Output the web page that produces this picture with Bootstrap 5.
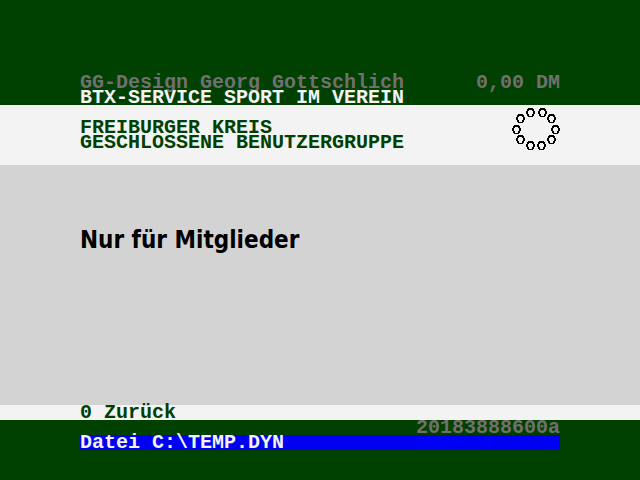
<!DOCTYPE html>
<html lang="de">
<head>
<meta charset="utf-8">
<meta name="viewport" content="width=device-width, initial-scale=1">
<title>BTX-Service Sport im Verein</title>
<link href="https://cdn.jsdelivr.net/npm/bootstrap@5.3.0/dist/css/bootstrap.min.css" rel="stylesheet">
<style>
:root { --btx-green: #004000; --btx-light: #f3f3f3; --btx-grey: #d3d3d3; --btx-dim: #707070; --btx-blue: #0000f3; }
body { background: var(--btx-green); color: var(--btx-light); font: 700 20px/15px "Liberation Mono", monospace; }
.screen-col { width: 75%; }
.top-band { padding-top: 75px; }
.dim { color: var(--btx-dim); }
.light-band { background: var(--btx-light); color: var(--btx-green); }
.club-names { padding: 15px 0; }
.grey-band { background: var(--btx-grey); color: #000; padding: 60px 0; }
.headline { font: 700 24px/30px "DejaVu Sans Condensed", "DejaVu Sans", sans-serif; }
.input-line { background: var(--btx-blue); }
.bottom-band { padding-bottom: 30px; }
</style>
</head>
<body class="min-vh-100 d-flex flex-column">
<header class="top-band">
  <div class="screen-col mx-auto">
    <div class="dim d-flex justify-content-between text-nowrap"><span>GG-Design Georg Gottschlich</span><span>0,00 DM</span></div>
    <div>BTX-SERVICE SPORT IM VEREIN</div>
  </div>
</header>
<section class="light-band">
  <div class="screen-col mx-auto d-flex justify-content-between align-items-start">
    <div class="club-names"><div>FREIBURGER KREIS</div><div>GESCHLOSSENE BENUTZERGRUPPE</div></div>
    <svg width="48" height="48" viewBox="0 0 48 48" shape-rendering="crispEdges" role="img" aria-label="Freiburger Kreis">
      <defs>
        <path id="link-ring" fill-rule="evenodd" d="M2 0H7V1H8V3H9V6H8V8H7V9H2V8H1V6H0V3H1V1H2ZM3 2V3H2V6H3V8H6V6H7V3H6V2Z"/>
      </defs>
      <use href="#link-ring" x="14" y="3"/>
      <use href="#link-ring" x="26" y="3"/>
      <use href="#link-ring" x="35" y="9"/>
      <use href="#link-ring" x="39" y="20"/>
      <use href="#link-ring" x="35" y="30"/>
      <use href="#link-ring" x="25" y="36"/>
      <use href="#link-ring" x="14" y="36"/>
      <use href="#link-ring" x="4" y="30"/>
      <use href="#link-ring" x="0" y="20"/>
      <use href="#link-ring" x="4" y="9"/>
    </svg>
  </div>
</section>
<main class="grey-band flex-grow-1">
  <div class="screen-col mx-auto"><h1 class="headline m-0">Nur für Mitglieder</h1></div>
</main>
<nav class="light-band" aria-label="Seite">
  <div class="screen-col mx-auto"><a class="d-block text-reset text-decoration-none" href="#">0 Zurück</a></div>
</nav>
<footer class="bottom-band">
  <div class="screen-col mx-auto">
    <div class="dim text-end">20183888600a</div>
    <div class="input-line">Datei C:\TEMP.DYN</div>
  </div>
</footer>
<script src="https://cdn.jsdelivr.net/npm/bootstrap@5.3.0/dist/js/bootstrap.bundle.min.js"></script>
</body>
</html>
